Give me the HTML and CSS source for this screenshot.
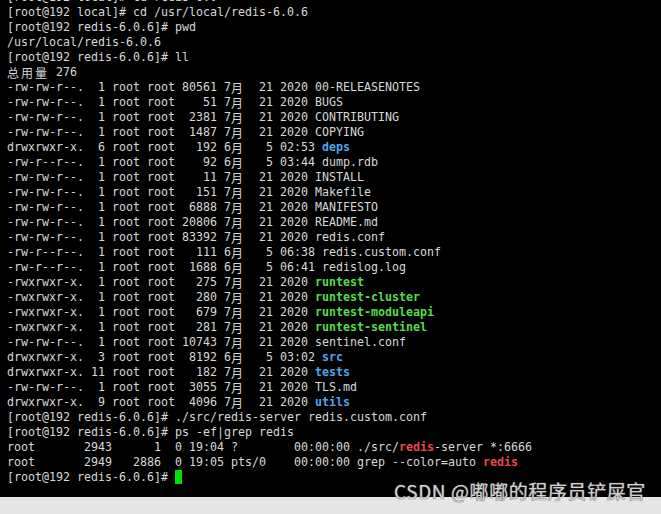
FILE: index.html
```html
<!DOCTYPE html>
<html lang="zh">
<head>
<meta charset="utf-8">
<title>terminal</title>
<link rel="stylesheet" href="styles.css">
</head>
<body>
<div class="page">
<div class="screen">
<pre class="term"><span>[root@192 local]# cd redis-6.0</span>
<span>[root@192 local]# cd /usr/local/redis-6.0.6</span>
<span>[root@192 redis-6.0.6]# pwd</span>
<span>/usr/local/redis-6.0.6</span>
<span>[root@192 redis-6.0.6]# ll</span>
<span><i class="w">总</i><i class="w">用</i><i class="w">量</i> 276</span>
<span>-rw-rw-r--.  1 root root 80561 7<i class="w">月</i>  21 2020 00-RELEASENOTES</span>
<span>-rw-rw-r--.  1 root root    51 7<i class="w">月</i>  21 2020 BUGS</span>
<span>-rw-rw-r--.  1 root root  2381 7<i class="w">月</i>  21 2020 CONTRIBUTING</span>
<span>-rw-rw-r--.  1 root root  1487 7<i class="w">月</i>  21 2020 COPYING</span>
<span>drwxrwxr-x.  6 root root   192 6<i class="w">月</i>   5 02:53 <b class="dir">deps</b></span>
<span>-rw-r--r--.  1 root root    92 6<i class="w">月</i>   5 03:44 dump.rdb</span>
<span>-rw-rw-r--.  1 root root    11 7<i class="w">月</i>  21 2020 INSTALL</span>
<span>-rw-rw-r--.  1 root root   151 7<i class="w">月</i>  21 2020 Makefile</span>
<span>-rw-rw-r--.  1 root root  6888 7<i class="w">月</i>  21 2020 MANIFESTO</span>
<span>-rw-rw-r--.  1 root root 20806 7<i class="w">月</i>  21 2020 README.md</span>
<span>-rw-rw-r--.  1 root root 83392 7<i class="w">月</i>  21 2020 redis.conf</span>
<span>-rw-r--r--.  1 root root   111 6<i class="w">月</i>   5 06:38 redis.custom.conf</span>
<span>-rw-r--r--.  1 root root  1688 6<i class="w">月</i>   5 06:41 redislog.log</span>
<span>-rwxrwxr-x.  1 root root   275 7<i class="w">月</i>  21 2020 <b class="exe">runtest</b></span>
<span>-rwxrwxr-x.  1 root root   280 7<i class="w">月</i>  21 2020 <b class="exe">runtest-cluster</b></span>
<span>-rwxrwxr-x.  1 root root   679 7<i class="w">月</i>  21 2020 <b class="exe">runtest-moduleapi</b></span>
<span>-rwxrwxr-x.  1 root root   281 7<i class="w">月</i>  21 2020 <b class="exe">runtest-sentinel</b></span>
<span>-rw-rw-r--.  1 root root 10743 7<i class="w">月</i>  21 2020 sentinel.conf</span>
<span>drwxrwxr-x.  3 root root  8192 6<i class="w">月</i>   5 03:02 <b class="dir">src</b></span>
<span>drwxrwxr-x. 11 root root   182 7<i class="w">月</i>  21 2020 <b class="dir">tests</b></span>
<span>-rw-rw-r--.  1 root root  3055 7<i class="w">月</i>  21 2020 TLS.md</span>
<span>drwxrwxr-x.  9 root root  4096 7<i class="w">月</i>  21 2020 <b class="dir">utils</b></span>
<span>[root@192 redis-6.0.6]# ./src/redis-server redis.custom.conf</span>
<span>[root@192 redis-6.0.6]# ps -ef|grep redis</span>
<span>root       2943      1  0 19:04 ?        00:00:00 ./src/<b class="hit">redis</b>-server *:6666</span>
<span>root       2949   2886  0 19:05 pts/0    00:00:00 grep --color=auto <b class="hit">redis</b></span>
<span>[root@192 redis-6.0.6]# <i class="cursor"></i></span></pre>
</div>
<div class="statusbar"></div>
<div class="watermark">CSDN @嘟嘟的程序员铲屎官</div>
</div>
</body>
</html>
```
FILE: styles.css
```css
html, body {
  margin: 0;
  padding: 0;
  background: #e6e6e6;
}
.page {
  position: relative;
  width: 661px;
  height: 514px;
  overflow: hidden;
}
.screen {
  background: #000;
  height: 497px;
  overflow: hidden;
}
.term {
  margin: -10px 0 0 7px;
  font-family: "DejaVu Sans Mono", "Noto Sans CJK SC", monospace;
  font-size: 11.63px;
  line-height: 15px;
  color: #d8d8d8;
  white-space: pre;
}
.term i {
  font-style: normal;
}
.term .w {
  display: inline-block;
  width: 14px;
  font-family: "Noto Sans CJK SC", sans-serif;
  font-size: 12px;
  line-height: 15px;
  vertical-align: top;
}
.term b {
  font-weight: bold;
}
.dir {
  color: #4ea6ea;
}
.exe {
  color: #55dd48;
}
.hit {
  color: #e84a4a;
}
.cursor {
  display: inline-block;
  width: 7px;
  height: 14px;
  background: #00e000;
  vertical-align: -3px;
}
.statusbar {
  height: 17px;
  background: #e6e6e6;
}
.watermark {
  position: absolute;
  left: 394px;
  top: 479px;
  font-family: "Noto Sans CJK SC", sans-serif;
  font-size: 19px;
  line-height: 24px;
  letter-spacing: 0.6px;
  color: #cfcfcf;
  text-shadow: 0 0 1px #666, 0 0 1px #666;
  white-space: nowrap;
}
```
